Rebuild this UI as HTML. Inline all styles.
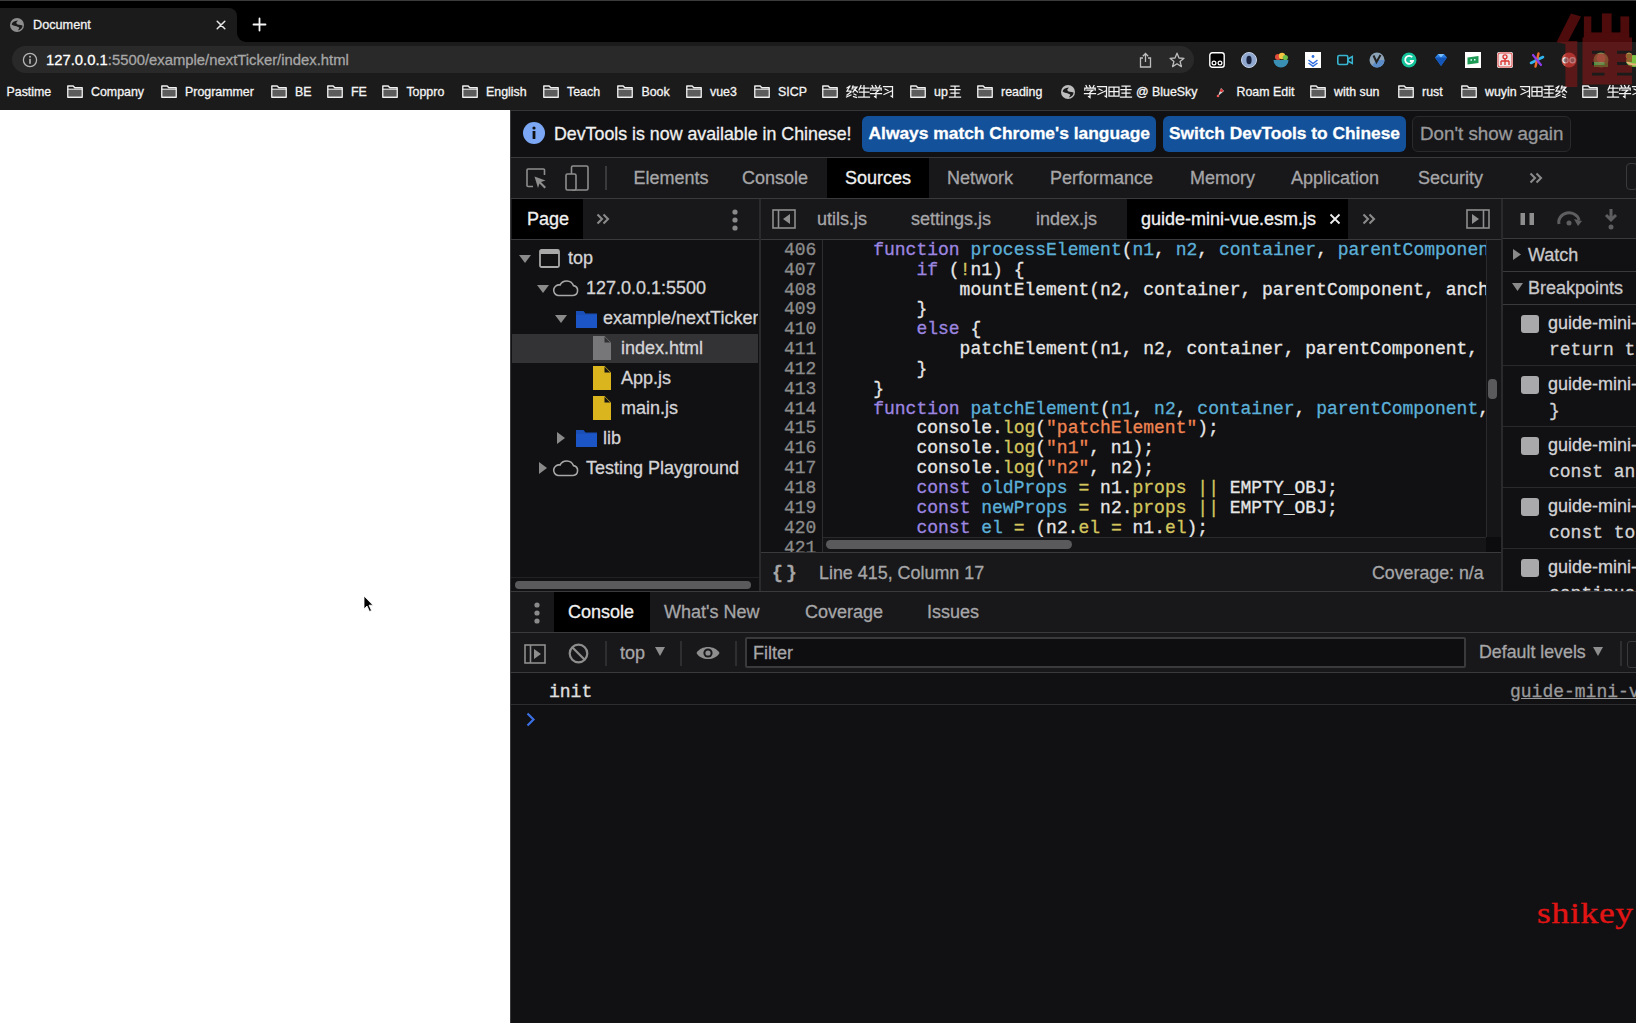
<!DOCTYPE html>
<html><head><meta charset="utf-8">
<style>
*{margin:0;padding:0;box-sizing:border-box}
html,body{width:1636px;height:1023px;overflow:hidden;background:#fff;font-family:"Liberation Sans",sans-serif;position:relative}
.a{position:absolute}
.t{position:absolute;white-space:nowrap;-webkit-text-stroke:0.3px currentColor}
.m{font-family:"Liberation Mono",monospace}
svg{position:absolute;overflow:visible}
</style></head><body>
<div class="a" style="left:0px;top:0px;width:1636px;height:42px;background:#000;"></div>
<div class="a" style="left:0px;top:0px;width:1636px;height:1px;background:#3b3b3b;"></div>
<div class="a" style="left:0px;top:8px;width:237px;height:34px;background:#1b1b1b;border-top-right-radius:8px;border-top-left-radius:0"></div>
<div class="a" style="left:237px;top:30px;width:12px;height:12px;background:#1b1b1b;"></div>
<div class="a" style="left:237px;top:22px;width:22px;height:20px;background:#000;border-bottom-left-radius:9px"></div>
<svg style="left:10px;top:18px;" width="14" height="14" viewBox="0 0 14 14"><g transform="scale(1.0)"><circle cx="7" cy="7" r="7" fill="#8e8e8e"/><path d="M1.6 6.6 C2 4.2 4 2.6 8 2.4 L6.3 4.6 C6.3 6.4 8.3 7 10.6 7 L12.6 7.6 C12.4 10.2 10.8 11.8 7.8 12.4 L9.4 10 C8.6 8.4 5 8.6 1.6 6.6 Z" fill="#1b1b1b"/></g></svg>
<div class="t" style="left:33px;top:19.25px;font-size:12.7px;line-height:12.7px;color:#f2f2f2;">Document</div>
<svg style="left:216px;top:20px;" width="10" height="10" viewBox="0 0 10 10"><path d="M1.2 1.2 L8.8 8.8 M8.8 1.2 L1.2 8.8" stroke="#e8e8e8" stroke-width="1.5" stroke-linecap="round"/></svg>
<svg style="left:253px;top:18px;" width="13" height="13" viewBox="0 0 13 13"><path d="M6.5 0.5 V12.5 M0.5 6.5 H12.5" stroke="#f5f5f5" stroke-width="1.8" stroke-linecap="round"/></svg>
<div class="a" style="left:0px;top:42px;width:1636px;height:68px;background:#1b1b1b;"></div>
<div class="a" style="left:12px;top:46px;width:1182px;height:27px;background:#292929;border-radius:14px"></div>
<svg style="left:22px;top:52px;" width="16" height="16" viewBox="0 0 16 16"><circle cx="8" cy="8" r="6.6" fill="none" stroke="#b5b5b5" stroke-width="1.3"/><rect x="7.2" y="6.8" width="1.6" height="5" fill="#b5b5b5"/><circle cx="8" cy="4.7" r="1" fill="#b5b5b5"/></svg>
<div class="t" style="left:46px;top:52.94px;font-size:14.84px;line-height:14.84px;color:#ffffff;">127.0.0.1<span style="color:#a6a6a6">:5500/example/nextTicker/index.html</span></div>
<svg style="left:1139px;top:52px;" width="13" height="16" viewBox="0 0 13 16"><path d="M4 6 H1.5 V15 H11.5 V6 H9" fill="none" stroke="#bdbdbd" stroke-width="1.3"/><path d="M6.5 1.5 V10 M3.8 4.2 L6.5 1.5 L9.2 4.2" fill="none" stroke="#bdbdbd" stroke-width="1.3"/></svg>
<svg style="left:1169px;top:52px;" width="16" height="16" viewBox="0 0 16 16"><path d="M8 1.2 L10 6 L15 6.3 L11.1 9.5 L12.4 14.6 L8 11.8 L3.6 14.6 L4.9 9.5 L1 6.3 L6 6 Z" fill="none" stroke="#bdbdbd" stroke-width="1.3" stroke-linejoin="round"/></svg>
<svg style="left:1209px;top:52px;" width="16" height="16" viewBox="0 0 16 16"><rect x="0.8" y="0.8" width="14.4" height="14.4" rx="2.5" fill="#000" stroke="#fff" stroke-width="1.4"/><circle cx="5" cy="11" r="1.9" fill="none" stroke="#fff" stroke-width="1.2"/><circle cx="11" cy="11" r="1.9" fill="none" stroke="#fff" stroke-width="1.2"/></svg>
<svg style="left:1241px;top:52px;" width="16" height="16" viewBox="0 0 16 16"><circle cx="8" cy="8" r="7.5" fill="#8fa6cf"/><ellipse cx="8" cy="8" rx="2.6" ry="4.3" fill="#1a2440"/><circle cx="8" cy="8" r="7.5" fill="none" stroke="#c8d4ea" stroke-width="1"/></svg>
<svg style="left:1273px;top:52px;" width="16" height="16" viewBox="0 0 16 16"><path d="M0.5 8 A7.5 7.5 0 0 0 15.5 8 Z" fill="#3a8fb5"/><circle cx="5" cy="5" r="3" fill="#e04b3b"/><circle cx="9" cy="4" r="3.2" fill="#f4c443"/><circle cx="12.3" cy="5.5" r="2.6" fill="#6bbf4a"/></svg>
<svg style="left:1305px;top:52px;" width="16" height="16" viewBox="0 0 16 16"><rect x="0" y="0" width="16" height="16" fill="#fff"/><path d="M3.5 8 L8 11.5 L12.5 8 M3.5 11 L8 14.3 L12.5 11" fill="none" stroke="#2f6de0" stroke-width="1.4"/><circle cx="8" cy="4.5" r="1.4" fill="#2f6de0"/></svg>
<svg style="left:1337px;top:52px;" width="16" height="16" viewBox="0 0 16 16"><rect x="0.8" y="3.5" width="10" height="9" rx="1.5" fill="none" stroke="#37b5d0" stroke-width="1.6"/><path d="M11 7 L15.3 4.5 V11.5 L11 9 Z" fill="none" stroke="#37b5d0" stroke-width="1.5"/></svg>
<svg style="left:1369px;top:52px;" width="16" height="16" viewBox="0 0 16 16"><circle cx="8" cy="8" r="7.5" fill="#8da3b8"/><path d="M8 8 L15.5 8 A7.5 7.5 0 0 1 3 13.5 Z" fill="#5b8cc8"/><path d="M4.5 3.5 L7.5 10 L11.5 3" fill="none" stroke="#222" stroke-width="2"/></svg>
<svg style="left:1401px;top:52px;" width="16" height="16" viewBox="0 0 16 16"><circle cx="8" cy="8" r="7.5" fill="#15c39a"/><path d="M11.2 5.2 A4 4 0 1 0 12 9 H8.8" fill="none" stroke="#fff" stroke-width="1.8"/></svg>
<svg style="left:1433px;top:52px;" width="16" height="16" viewBox="0 0 16 16"><path d="M2 5.5 L5 2 H11 L14 5.5 L8 14 Z" fill="#2a7de1"/><path d="M2 5.5 H14 L8 14 Z" fill="#1456b8"/><path d="M5 2 L8 5.5 L11 2" fill="#7cc1ff"/></svg>
<svg style="left:1465px;top:52px;" width="16" height="16" viewBox="0 0 16 16"><rect x="0" y="0" width="16" height="16" fill="#fff"/><path d="M2.5 5.5 L13.5 4 V11 L2.5 12.5 Z" fill="#1f9a55"/><rect x="5.5" y="7.2" width="1.5" height="1.5" fill="#dff"/><rect x="9" y="7" width="1.5" height="1.5" fill="#dff"/></svg>
<svg style="left:1497px;top:52px;" width="16" height="16" viewBox="0 0 16 16"><rect x="0" y="0" width="16" height="16" rx="2" fill="#f2e6e6"/><rect x="1" y="1" width="14" height="14" rx="2" fill="none" stroke="#d44" stroke-width="1"/><circle cx="8" cy="4.8" r="2" fill="none" stroke="#d33" stroke-width="1.3"/><path d="M8 7 V13 M4 9 H12 M4 9 V13 M12 9 V13" stroke="#d33" stroke-width="1.3" fill="none"/></svg>
<svg style="left:1529px;top:52px;" width="16" height="16" viewBox="0 0 16 16"><path d="M2 11 L14 5" stroke="#30b6f0" stroke-width="2.6" stroke-linecap="round"/><path d="M9.5 1.5 L6.5 14.5" stroke="#ef6d2c" stroke-width="2.4" stroke-linecap="round"/><path d="M4 3 L12 13" stroke="#8d3cf0" stroke-width="2.2" stroke-linecap="round"/></svg>
<svg style="left:1561px;top:52px;" width="16" height="16" viewBox="0 0 16 16"><circle cx="8" cy="8" r="7.5" fill="#c8574a"/><circle cx="4.5" cy="8.3" r="2.6" fill="#888" stroke="#eee" stroke-width="1.2"/><circle cx="11.5" cy="8.3" r="2.6" fill="#888" stroke="#eee" stroke-width="1.2"/></svg>
<svg style="left:1593px;top:52px;" width="16" height="16" viewBox="0 0 16 16"><circle cx="8" cy="8" r="7.5" fill="#6d8a4a"/><circle cx="8" cy="6" r="4.5" fill="#b38c66"/><path d="M1 11 Q8 16 15 10 V15 H1Z" fill="#3e9a3e"/></svg>
<svg style="left:1625px;top:52px;" width="16" height="16" viewBox="0 0 16 16"><ellipse cx="9" cy="9" rx="8" ry="6" fill="#7bc043"/><circle cx="4" cy="4" r="3" fill="#7bc043" stroke="#c69b5a" stroke-width="1"/><path d="M2 10 Q9 15 16 10" fill="none" stroke="#e8b07a" stroke-width="2"/></svg>
<div class="t" style="left:6.5px;top:85.50px;font-size:12.4px;line-height:12.4px;color:#f4f4f4;">Pastime</div>
<svg style="left:67px;top:85px;" width="16" height="13" viewBox="0 0 16 13"><rect x="1.4" y="4.6" width="13.2" height="7.2" fill="#5c5c5c"/><path d="M0.8 1.0 h5.4 l1.6 1.7 h7.4 v9.6 h-14.4 z" fill="none" stroke="#f0f0f0" stroke-width="1.4" stroke-linejoin="round"/><path d="M0.8 4.2 h14.4" stroke="#f0f0f0" stroke-width="1.1"/></svg>
<div class="t" style="left:91px;top:85.50px;font-size:12.4px;line-height:12.4px;color:#f4f4f4;">Company</div>
<svg style="left:161px;top:85px;" width="16" height="13" viewBox="0 0 16 13"><rect x="1.4" y="4.6" width="13.2" height="7.2" fill="#5c5c5c"/><path d="M0.8 1.0 h5.4 l1.6 1.7 h7.4 v9.6 h-14.4 z" fill="none" stroke="#f0f0f0" stroke-width="1.4" stroke-linejoin="round"/><path d="M0.8 4.2 h14.4" stroke="#f0f0f0" stroke-width="1.1"/></svg>
<div class="t" style="left:185px;top:85.50px;font-size:12.4px;line-height:12.4px;color:#f4f4f4;">Programmer</div>
<svg style="left:271px;top:85px;" width="16" height="13" viewBox="0 0 16 13"><rect x="1.4" y="4.6" width="13.2" height="7.2" fill="#5c5c5c"/><path d="M0.8 1.0 h5.4 l1.6 1.7 h7.4 v9.6 h-14.4 z" fill="none" stroke="#f0f0f0" stroke-width="1.4" stroke-linejoin="round"/><path d="M0.8 4.2 h14.4" stroke="#f0f0f0" stroke-width="1.1"/></svg>
<div class="t" style="left:295px;top:85.50px;font-size:12.4px;line-height:12.4px;color:#f4f4f4;">BE</div>
<svg style="left:327px;top:85px;" width="16" height="13" viewBox="0 0 16 13"><rect x="1.4" y="4.6" width="13.2" height="7.2" fill="#5c5c5c"/><path d="M0.8 1.0 h5.4 l1.6 1.7 h7.4 v9.6 h-14.4 z" fill="none" stroke="#f0f0f0" stroke-width="1.4" stroke-linejoin="round"/><path d="M0.8 4.2 h14.4" stroke="#f0f0f0" stroke-width="1.1"/></svg>
<div class="t" style="left:351px;top:85.50px;font-size:12.4px;line-height:12.4px;color:#f4f4f4;">FE</div>
<svg style="left:382px;top:85px;" width="16" height="13" viewBox="0 0 16 13"><rect x="1.4" y="4.6" width="13.2" height="7.2" fill="#5c5c5c"/><path d="M0.8 1.0 h5.4 l1.6 1.7 h7.4 v9.6 h-14.4 z" fill="none" stroke="#f0f0f0" stroke-width="1.4" stroke-linejoin="round"/><path d="M0.8 4.2 h14.4" stroke="#f0f0f0" stroke-width="1.1"/></svg>
<div class="t" style="left:406.4px;top:85.50px;font-size:12.4px;line-height:12.4px;color:#f4f4f4;">Toppro</div>
<svg style="left:462px;top:85px;" width="16" height="13" viewBox="0 0 16 13"><rect x="1.4" y="4.6" width="13.2" height="7.2" fill="#5c5c5c"/><path d="M0.8 1.0 h5.4 l1.6 1.7 h7.4 v9.6 h-14.4 z" fill="none" stroke="#f0f0f0" stroke-width="1.4" stroke-linejoin="round"/><path d="M0.8 4.2 h14.4" stroke="#f0f0f0" stroke-width="1.1"/></svg>
<div class="t" style="left:486px;top:85.50px;font-size:12.4px;line-height:12.4px;color:#f4f4f4;">English</div>
<svg style="left:542.5px;top:85px;" width="16" height="13" viewBox="0 0 16 13"><rect x="1.4" y="4.6" width="13.2" height="7.2" fill="#5c5c5c"/><path d="M0.8 1.0 h5.4 l1.6 1.7 h7.4 v9.6 h-14.4 z" fill="none" stroke="#f0f0f0" stroke-width="1.4" stroke-linejoin="round"/><path d="M0.8 4.2 h14.4" stroke="#f0f0f0" stroke-width="1.1"/></svg>
<div class="t" style="left:567px;top:85.50px;font-size:12.4px;line-height:12.4px;color:#f4f4f4;">Teach</div>
<svg style="left:617px;top:85px;" width="16" height="13" viewBox="0 0 16 13"><rect x="1.4" y="4.6" width="13.2" height="7.2" fill="#5c5c5c"/><path d="M0.8 1.0 h5.4 l1.6 1.7 h7.4 v9.6 h-14.4 z" fill="none" stroke="#f0f0f0" stroke-width="1.4" stroke-linejoin="round"/><path d="M0.8 4.2 h14.4" stroke="#f0f0f0" stroke-width="1.1"/></svg>
<div class="t" style="left:641.4px;top:85.50px;font-size:12.4px;line-height:12.4px;color:#f4f4f4;">Book</div>
<svg style="left:686px;top:85px;" width="16" height="13" viewBox="0 0 16 13"><rect x="1.4" y="4.6" width="13.2" height="7.2" fill="#5c5c5c"/><path d="M0.8 1.0 h5.4 l1.6 1.7 h7.4 v9.6 h-14.4 z" fill="none" stroke="#f0f0f0" stroke-width="1.4" stroke-linejoin="round"/><path d="M0.8 4.2 h14.4" stroke="#f0f0f0" stroke-width="1.1"/></svg>
<div class="t" style="left:710px;top:85.50px;font-size:12.4px;line-height:12.4px;color:#f4f4f4;">vue3</div>
<svg style="left:754px;top:85px;" width="16" height="13" viewBox="0 0 16 13"><rect x="1.4" y="4.6" width="13.2" height="7.2" fill="#5c5c5c"/><path d="M0.8 1.0 h5.4 l1.6 1.7 h7.4 v9.6 h-14.4 z" fill="none" stroke="#f0f0f0" stroke-width="1.4" stroke-linejoin="round"/><path d="M0.8 4.2 h14.4" stroke="#f0f0f0" stroke-width="1.1"/></svg>
<div class="t" style="left:778px;top:85.50px;font-size:12.4px;line-height:12.4px;color:#f4f4f4;">SICP</div>
<svg style="left:822px;top:85px;" width="16" height="13" viewBox="0 0 16 13"><rect x="1.4" y="4.6" width="13.2" height="7.2" fill="#5c5c5c"/><path d="M0.8 1.0 h5.4 l1.6 1.7 h7.4 v9.6 h-14.4 z" fill="none" stroke="#f0f0f0" stroke-width="1.4" stroke-linejoin="round"/><path d="M0.8 4.2 h14.4" stroke="#f0f0f0" stroke-width="1.1"/></svg>
<svg style="left:846.0px;top:85.4px;" width="12" height="13" viewBox="0 0 12 13"><path d="M1 3 L4 1 M4 1 L1 6 H5 M1 10 L5 7 M0.5 12 L5 10 M7 1 L6 4 M6.5 2 H11 L7 7 M8 4 L11.5 7 M8 9 L10 10 M7.5 11.5 L10.5 12.5" fill="none" stroke="#f4f4f4" stroke-width="1.25" stroke-linecap="square"/></svg><svg style="left:857.9px;top:85.4px;" width="12" height="13" viewBox="0 0 12 13"><path d="M3 0.5 L1 5 M2.5 3 H11 M1.5 7 H11 M6 0.5 V12 M0.5 12 H11.5" fill="none" stroke="#f4f4f4" stroke-width="1.25" stroke-linecap="square"/></svg><svg style="left:869.8px;top:85.4px;" width="12" height="13" viewBox="0 0 12 13"><path d="M2 0.5 L3 2.5 M5.5 0.5 L6.5 2.5 M10 0.5 L9 2.5 M0.8 5 V3 H11.2 V5 M3 5 H9 L6 7.5 M6 7.5 V12.5 L4.5 11.5 M0.5 8.5 H11.5" fill="none" stroke="#f4f4f4" stroke-width="1.25" stroke-linecap="square"/></svg><svg style="left:881.7px;top:85.4px;" width="12" height="13" viewBox="0 0 12 13"><path d="M1.5 1.5 H10.5 V12 L9 11 M3 4 L6 5.5 M2 9.5 L9.5 6" fill="none" stroke="#f4f4f4" stroke-width="1.25" stroke-linecap="square"/></svg>
<svg style="left:910px;top:85px;" width="16" height="13" viewBox="0 0 16 13"><rect x="1.4" y="4.6" width="13.2" height="7.2" fill="#5c5c5c"/><path d="M0.8 1.0 h5.4 l1.6 1.7 h7.4 v9.6 h-14.4 z" fill="none" stroke="#f0f0f0" stroke-width="1.4" stroke-linejoin="round"/><path d="M0.8 4.2 h14.4" stroke="#f0f0f0" stroke-width="1.1"/></svg>
<div class="t" style="left:934px;top:85.50px;font-size:12.4px;line-height:12.4px;color:#f4f4f4;">up</div>
<svg style="left:949px;top:85.4px;" width="12" height="13" viewBox="0 0 12 13"><path d="M2 1 H10 M1 4.5 H11 M6 1 V12 M2 8 H10 M0.5 12 H11.5" fill="none" stroke="#f4f4f4" stroke-width="1.25" stroke-linecap="square"/></svg>
<svg style="left:977px;top:85px;" width="16" height="13" viewBox="0 0 16 13"><rect x="1.4" y="4.6" width="13.2" height="7.2" fill="#5c5c5c"/><path d="M0.8 1.0 h5.4 l1.6 1.7 h7.4 v9.6 h-14.4 z" fill="none" stroke="#f0f0f0" stroke-width="1.4" stroke-linejoin="round"/><path d="M0.8 4.2 h14.4" stroke="#f0f0f0" stroke-width="1.1"/></svg>
<div class="t" style="left:1001px;top:85.50px;font-size:12.4px;line-height:12.4px;color:#f4f4f4;">reading</div>
<svg style="left:1061px;top:85px;" width="14" height="14" viewBox="0 0 14 14"><g transform="scale(1.0)"><circle cx="7" cy="7" r="7" fill="#bdbdbd"/><path d="M1.6 6.6 C2 4.2 4 2.6 8 2.4 L6.3 4.6 C6.3 6.4 8.3 7 10.6 7 L12.6 7.6 C12.4 10.2 10.8 11.8 7.8 12.4 L9.4 10 C8.6 8.4 5 8.6 1.6 6.6 Z" fill="#1b1b1b"/></g></svg>
<svg style="left:1084.0px;top:85.4px;" width="12" height="13" viewBox="0 0 12 13"><path d="M2 0.5 L3 2.5 M5.5 0.5 L6.5 2.5 M10 0.5 L9 2.5 M0.8 5 V3 H11.2 V5 M3 5 H9 L6 7.5 M6 7.5 V12.5 L4.5 11.5 M0.5 8.5 H11.5" fill="none" stroke="#f4f4f4" stroke-width="1.25" stroke-linecap="square"/></svg><svg style="left:1095.9px;top:85.4px;" width="12" height="13" viewBox="0 0 12 13"><path d="M1.5 1.5 H10.5 V12 L9 11 M3 4 L6 5.5 M2 9.5 L9.5 6" fill="none" stroke="#f4f4f4" stroke-width="1.25" stroke-linecap="square"/></svg><svg style="left:1107.8px;top:85.4px;" width="12" height="13" viewBox="0 0 12 13"><path d="M1 2 H11 V11 H1 Z M1 6.5 H11 M6 2 V11" fill="none" stroke="#f4f4f4" stroke-width="1.25" stroke-linecap="square"/></svg><svg style="left:1119.7px;top:85.4px;" width="12" height="13" viewBox="0 0 12 13"><path d="M2 1 H10 M1 4.5 H11 M6 1 V12 M2 8 H10 M0.5 12 H11.5" fill="none" stroke="#f4f4f4" stroke-width="1.25" stroke-linecap="square"/></svg>
<div class="t" style="left:1136px;top:85.50px;font-size:12.4px;line-height:12.4px;color:#f4f4f4;">@ BlueSky</div>
<svg style="left:1215px;top:85px;" width="12" height="13" viewBox="0 0 12 13"><path d="M3 11 L6 3 L9 6 Z" fill="#ddd"/><circle cx="6.5" cy="5.5" r="1.6" fill="#d33"/><circle cx="3" cy="11" r="1.3" fill="#e55"/></svg>
<div class="t" style="left:1236.5px;top:85.50px;font-size:12.4px;line-height:12.4px;color:#f4f4f4;">Roam Edit</div>
<svg style="left:1310px;top:85px;" width="16" height="13" viewBox="0 0 16 13"><rect x="1.4" y="4.6" width="13.2" height="7.2" fill="#5c5c5c"/><path d="M0.8 1.0 h5.4 l1.6 1.7 h7.4 v9.6 h-14.4 z" fill="none" stroke="#f0f0f0" stroke-width="1.4" stroke-linejoin="round"/><path d="M0.8 4.2 h14.4" stroke="#f0f0f0" stroke-width="1.1"/></svg>
<div class="t" style="left:1334px;top:85.50px;font-size:12.4px;line-height:12.4px;color:#f4f4f4;">with sun</div>
<svg style="left:1398px;top:85px;" width="16" height="13" viewBox="0 0 16 13"><rect x="1.4" y="4.6" width="13.2" height="7.2" fill="#5c5c5c"/><path d="M0.8 1.0 h5.4 l1.6 1.7 h7.4 v9.6 h-14.4 z" fill="none" stroke="#f0f0f0" stroke-width="1.4" stroke-linejoin="round"/><path d="M0.8 4.2 h14.4" stroke="#f0f0f0" stroke-width="1.1"/></svg>
<div class="t" style="left:1422px;top:85.50px;font-size:12.4px;line-height:12.4px;color:#f4f4f4;">rust</div>
<svg style="left:1461px;top:85px;" width="16" height="13" viewBox="0 0 16 13"><rect x="1.4" y="4.6" width="13.2" height="7.2" fill="#5c5c5c"/><path d="M0.8 1.0 h5.4 l1.6 1.7 h7.4 v9.6 h-14.4 z" fill="none" stroke="#f0f0f0" stroke-width="1.4" stroke-linejoin="round"/><path d="M0.8 4.2 h14.4" stroke="#f0f0f0" stroke-width="1.1"/></svg>
<div class="t" style="left:1485px;top:85.50px;font-size:12.4px;line-height:12.4px;color:#f4f4f4;">wuyin</div>
<svg style="left:1519.0px;top:85.4px;" width="12" height="13" viewBox="0 0 12 13"><path d="M1.5 1.5 H10.5 V12 L9 11 M3 4 L6 5.5 M2 9.5 L9.5 6" fill="none" stroke="#f4f4f4" stroke-width="1.25" stroke-linecap="square"/></svg><svg style="left:1530.9px;top:85.4px;" width="12" height="13" viewBox="0 0 12 13"><path d="M1 2 H11 V11 H1 Z M1 6.5 H11 M6 2 V11" fill="none" stroke="#f4f4f4" stroke-width="1.25" stroke-linecap="square"/></svg><svg style="left:1542.8px;top:85.4px;" width="12" height="13" viewBox="0 0 12 13"><path d="M2 1 H10 M1 4.5 H11 M6 1 V12 M2 8 H10 M0.5 12 H11.5" fill="none" stroke="#f4f4f4" stroke-width="1.25" stroke-linecap="square"/></svg><svg style="left:1554.7px;top:85.4px;" width="12" height="13" viewBox="0 0 12 13"><path d="M1 3 L4 1 M4 1 L1 6 H5 M1 10 L5 7 M0.5 12 L5 10 M7 1 L6 4 M6.5 2 H11 L7 7 M8 4 L11.5 7 M8 9 L10 10 M7.5 11.5 L10.5 12.5" fill="none" stroke="#f4f4f4" stroke-width="1.25" stroke-linecap="square"/></svg>
<svg style="left:1582px;top:85px;" width="16" height="13" viewBox="0 0 16 13"><rect x="1.4" y="4.6" width="13.2" height="7.2" fill="#5c5c5c"/><path d="M0.8 1.0 h5.4 l1.6 1.7 h7.4 v9.6 h-14.4 z" fill="none" stroke="#f0f0f0" stroke-width="1.4" stroke-linejoin="round"/><path d="M0.8 4.2 h14.4" stroke="#f0f0f0" stroke-width="1.1"/></svg>
<svg style="left:1607.0px;top:85.4px;" width="12" height="13" viewBox="0 0 12 13"><path d="M3 0.5 L1 5 M2.5 3 H11 M1.5 7 H11 M6 0.5 V12 M0.5 12 H11.5" fill="none" stroke="#f4f4f4" stroke-width="1.25" stroke-linecap="square"/></svg><svg style="left:1618.9px;top:85.4px;" width="12" height="13" viewBox="0 0 12 13"><path d="M2 0.5 L3 2.5 M5.5 0.5 L6.5 2.5 M10 0.5 L9 2.5 M0.8 5 V3 H11.2 V5 M3 5 H9 L6 7.5 M6 7.5 V12.5 L4.5 11.5 M0.5 8.5 H11.5" fill="none" stroke="#f4f4f4" stroke-width="1.25" stroke-linecap="square"/></svg><svg style="left:1630.8px;top:85.4px;" width="12" height="13" viewBox="0 0 12 13"><path d="M1.5 1.5 H10.5 V12 L9 11 M3 4 L6 5.5 M2 9.5 L9.5 6" fill="none" stroke="#f4f4f4" stroke-width="1.25" stroke-linecap="square"/></svg>
<svg style="left:1550px;top:5px;" width="90" height="90" viewBox="0 0 90 90"><g fill="rgb(150,22,22)" opacity="0.52"><path d="M21 8.4 L31 11.4 L16.5 39.5 L6.6 37 Z"/><rect x="15.4" y="36" width="11.9" height="46"/><rect x="33.9" y="11.4" width="7.4" height="22.6"/><rect x="51.9" y="8.4" width="9.7" height="25.6"/><rect x="70.4" y="11.4" width="8.8" height="22.6"/><rect x="33.9" y="27.4" width="45.3" height="7.5"/><path fill-rule="evenodd" d="M32.5 32.5 H82 V79.6 H32.5 Z M42 45.7 H54.5 V48.8 H42 Z M67 45.7 H82 V48.8 H67 Z M42 57 H54.5 V60 H42 Z M67 57 H82 V60 H67 Z M42 67.7 H54.5 V70.4 H42 Z M67 67.7 H82 V70.4 H67 Z"/></g></svg>
<div class="a" style="left:510px;top:110px;width:1126px;height:913px;background:#111113;"></div>
<div class="a" style="left:510px;top:110px;width:1px;height:913px;background:#3a3a3c;"></div>
<div class="a" style="left:511px;top:110px;width:1125px;height:47px;background:#111113;"></div>
<svg style="left:523px;top:122px;" width="22" height="22" viewBox="0 0 22 22"><circle cx="11" cy="11" r="11" fill="#7ba7f5"/><rect x="9.6" y="9" width="2.8" height="8" rx="0.4" fill="#111"/><circle cx="11" cy="6" r="1.6" fill="#111"/></svg>
<div class="t" style="left:554px;top:125.63px;font-size:17.8px;line-height:17.8px;color:#f0f0f0;">DevTools is now available in Chinese!</div>
<div class="a" style="left:862px;top:116px;width:294px;height:36px;background:#13529a;border-radius:6px"></div>
<div class="t" style="left:868.5px;top:125.27px;font-size:17.4px;line-height:17.4px;color:#fff;font-weight:bold;">Always match Chrome's language</div>
<div class="a" style="left:1163px;top:116px;width:243px;height:36px;background:#13529a;border-radius:6px"></div>
<div class="t" style="left:1169px;top:125.31px;font-size:17.35px;line-height:17.35px;color:#fff;font-weight:bold;">Switch DevTools to Chinese</div>
<div class="a" style="left:1412px;top:116px;width:159px;height:36px;background:#161618;border-radius:6px;border:1px solid #2a2a2c"></div>
<div class="t" style="left:1420px;top:124.59px;font-size:18.8px;line-height:18.8px;color:#9a9a9c;">Don't show again</div>
<div class="a" style="left:511px;top:110px;width:1125px;height:1px;background:#353537;"></div>
<div class="a" style="left:511px;top:157px;width:1125px;height:1px;background:#3a3a3c;"></div>
<div class="a" style="left:511px;top:158px;width:1125px;height:40px;background:#18181a;"></div>
<svg style="left:526px;top:168px;" width="21" height="21" viewBox="0 0 21 21"><path d="M7 18.5 H2 A1 1 0 0 1 1 17.5 V2 A1 1 0 0 1 2 1 H17.5 A1 1 0 0 1 18.5 2 V7" fill="none" stroke="#8e8e8e" stroke-width="1.6"/><path d="M8.5 8.5 L19.5 12.5 L15 14 L20 19 L18.5 20.5 L13.5 15.5 L12 20 Z" fill="#8e8e8e"/></svg>
<svg style="left:565px;top:165px;" width="24" height="26" viewBox="0 0 24 26"><rect x="6.5" y="1" width="16.5" height="24" rx="1.5" fill="none" stroke="#8e8e8e" stroke-width="1.6"/><rect x="1" y="9" width="10" height="16" rx="1.5" fill="#18181a" stroke="#8e8e8e" stroke-width="1.6"/></svg>
<div class="a" style="left:605px;top:166px;width:2px;height:24px;background:#3a3a3c;"></div>
<div class="a" style="left:827px;top:158px;width:102px;height:40px;background:#000;"></div>
<div class="t" style="left:633.5px;top:168.76px;font-size:18px;line-height:18px;color:#a6a6a8;">Elements</div>
<div class="t" style="left:742px;top:168.76px;font-size:18px;line-height:18px;color:#a6a6a8;">Console</div>
<div class="t" style="left:845px;top:168.76px;font-size:18px;line-height:18px;color:#f0f0f0;">Sources</div>
<div class="t" style="left:947px;top:168.76px;font-size:18px;line-height:18px;color:#a6a6a8;">Network</div>
<div class="t" style="left:1050px;top:168.76px;font-size:18px;line-height:18px;color:#a6a6a8;">Performance</div>
<div class="t" style="left:1190px;top:168.76px;font-size:18px;line-height:18px;color:#a6a6a8;">Memory</div>
<div class="t" style="left:1291px;top:168.76px;font-size:18px;line-height:18px;color:#a6a6a8;">Application</div>
<div class="t" style="left:1418px;top:168.76px;font-size:18px;line-height:18px;color:#a6a6a8;">Security</div>
<svg style="left:1529px;top:172px;" width="14" height="12" viewBox="0 0 14 12"><path d="M1.5 1.5 L6 6 L1.5 10.5 M7.5 1.5 L12 6 L7.5 10.5" fill="none" stroke="#8a8a8a" stroke-width="2.1"/></svg>
<div class="a" style="left:1626px;top:163px;width:12px;height:27px;background:#18181a;border:1px solid #3a3a3c;border-radius:4px"></div>
<div class="a" style="left:511px;top:198px;width:1125px;height:1px;background:#3a3a3c;"></div>
<div class="a" style="left:511px;top:199px;width:249px;height:40px;background:#18181a;"></div>
<div class="a" style="left:512px;top:199px;width:71px;height:40px;background:#000;"></div>
<div class="t" style="left:527px;top:209.76px;font-size:18px;line-height:18px;color:#f0f0f0;">Page</div>
<svg style="left:596px;top:213px;" width="14" height="12" viewBox="0 0 14 12"><path d="M1.5 1.5 L6 6 L1.5 10.5 M7.5 1.5 L12 6 L7.5 10.5" fill="none" stroke="#8a8a8a" stroke-width="2.1"/></svg>
<svg style="left:732px;top:209px;" width="6" height="22" viewBox="0 0 6 22"><circle cx="3" cy="3" r="2.6" fill="#8a8a8a"/><circle cx="3" cy="11" r="2.6" fill="#8a8a8a"/><circle cx="3" cy="19" r="2.6" fill="#8a8a8a"/></svg>
<div class="a" style="left:511px;top:239px;width:249px;height:1px;background:#3a3a3c;"></div>
<div class="a" style="left:512px;top:334px;width:246px;height:29px;background:#333335;"></div>
<svg style="left:519px;top:255px;" width="12" height="8" viewBox="0 0 12 8"><path d="M0 0 H12 L6.0 8 Z" fill="#8a8a8a"/></svg>
<svg style="left:539px;top:249px;" width="21" height="19" viewBox="0 0 21 19"><rect x="1" y="1" width="19" height="17" rx="1.5" fill="none" stroke="#a8a8a8" stroke-width="1.8"/><rect x="1" y="1" width="19" height="4" fill="#a8a8a8"/></svg>
<div class="t" style="left:568px;top:248.76px;font-size:18px;line-height:18px;color:#d4d4d6;">top</div>
<svg style="left:537px;top:285px;" width="12" height="8" viewBox="0 0 12 8"><path d="M0 0 H12 L6.0 8 Z" fill="#8a8a8a"/></svg>
<svg style="left:552px;top:279px;" width="27" height="18" viewBox="0 0 27 18"><path d="M6 16.5 H21 A5 5 0 0 0 21.5 6.6 A7.5 7.5 0 0 0 8 6 A5.3 5.3 0 0 0 6 16.5 Z" fill="none" stroke="#a8a8a8" stroke-width="1.6"/></svg>
<div class="t" style="left:586px;top:278.76px;font-size:18px;line-height:18px;color:#d4d4d6;">127.0.0.1:5500</div>
<svg style="left:555px;top:315px;" width="12" height="8" viewBox="0 0 12 8"><path d="M0 0 H12 L6.0 8 Z" fill="#8a8a8a"/></svg>
<svg style="left:576px;top:310px;" width="21" height="18" viewBox="0 0 21 18"><path d="M0 1 H7.5 L9.5 3.5 H21 V18 H0 Z" fill="#1a4fb8"/><rect x="0" y="5" width="21" height="13" fill="#1c56c6"/></svg>
<div class="a" style="left:600px;top:300px;width:158px;height:40px;overflow:hidden"><div class="a" style="left:-600px;top:-300px"><div class="t" style="left:603px;top:308.76px;font-size:18px;line-height:18px;color:#d4d4d6;">example/nextTicker</div></div></div>
<div class="a" style="left:758px;top:240px;width:2px;height:351px;background:#111113;"></div>
<svg style="left:593px;top:336px;" width="18" height="24" viewBox="0 0 18 24"><path d="M0 0 H11.5 L18 6.5 V24 H0 Z" fill="#77777a"/><path d="M11.5 0.8 L17.2 6.5 H11.5 Z" fill="#303032"/></svg>
<div class="t" style="left:621px;top:338.76px;font-size:18px;line-height:18px;color:#d4d4d6;">index.html</div>
<svg style="left:593px;top:366px;" width="18" height="24" viewBox="0 0 18 24"><path d="M0 0 H11.5 L18 6.5 V24 H0 Z" fill="#dab51e"/><path d="M11.5 0.8 L17.2 6.5 H11.5 Z" fill="#151515"/></svg>
<div class="t" style="left:621px;top:368.76px;font-size:18px;line-height:18px;color:#d4d4d6;">App.js</div>
<svg style="left:593px;top:396px;" width="18" height="24" viewBox="0 0 18 24"><path d="M0 0 H11.5 L18 6.5 V24 H0 Z" fill="#dab51e"/><path d="M11.5 0.8 L17.2 6.5 H11.5 Z" fill="#151515"/></svg>
<div class="t" style="left:621px;top:398.76px;font-size:18px;line-height:18px;color:#d4d4d6;">main.js</div>
<svg style="left:557px;top:432px;" width="8" height="12" viewBox="0 0 8 12"><path d="M0 0 V12 L8 6.0 Z" fill="#8a8a8a"/></svg>
<svg style="left:576px;top:429px;" width="21" height="18" viewBox="0 0 21 18"><path d="M0 1 H7.5 L9.5 3.5 H21 V18 H0 Z" fill="#1a4fb8"/><rect x="0" y="5" width="21" height="13" fill="#1c56c6"/></svg>
<div class="t" style="left:603px;top:428.76px;font-size:18px;line-height:18px;color:#d4d4d6;">lib</div>
<svg style="left:539px;top:462px;" width="8" height="12" viewBox="0 0 8 12"><path d="M0 0 V12 L8 6.0 Z" fill="#8a8a8a"/></svg>
<svg style="left:552px;top:459px;" width="27" height="18" viewBox="0 0 27 18"><path d="M6 16.5 H21 A5 5 0 0 0 21.5 6.6 A7.5 7.5 0 0 0 8 6 A5.3 5.3 0 0 0 6 16.5 Z" fill="none" stroke="#a8a8a8" stroke-width="1.6"/></svg>
<div class="t" style="left:586px;top:458.76px;font-size:18px;line-height:18px;color:#d4d4d6;">Testing Playground</div>
<div class="a" style="left:511px;top:577px;width:248px;height:1px;background:#222224;"></div>
<div class="a" style="left:515px;top:581px;width:236px;height:8px;background:#5a5a5c;border-radius:4px"></div>
<div class="a" style="left:759px;top:199px;width:2px;height:392px;background:#2a2a2c;"></div>
<div class="a" style="left:761px;top:199px;width:740px;height:40px;background:#18181a;"></div>
<svg style="left:772px;top:209px;" width="24" height="20" viewBox="0 0 24 20"><rect x="1" y="1" width="22" height="18" fill="none" stroke="#8e8e8e" stroke-width="1.6"/><path d="M6.5 1 V19" stroke="#8e8e8e" stroke-width="1.6"/><path d="M18 5 V15 L11 10 Z" fill="#8e8e8e"/></svg>
<div class="t" style="left:817px;top:209.76px;font-size:18px;line-height:18px;color:#a6a6a8;">utils.js</div>
<div class="t" style="left:911px;top:209.76px;font-size:18px;line-height:18px;color:#a6a6a8;">settings.js</div>
<div class="t" style="left:1036px;top:209.76px;font-size:18px;line-height:18px;color:#a6a6a8;">index.js</div>
<div class="a" style="left:1127px;top:199px;width:221px;height:40px;background:#000;"></div>
<div class="t" style="left:1141px;top:209.76px;font-size:18px;line-height:18px;color:#f0f0f0;">guide-mini-vue.esm.js</div>
<svg style="left:1329px;top:213px;" width="12" height="12" viewBox="0 0 12 12"><path d="M1.5 1.5 L10.5 10.5 M10.5 1.5 L1.5 10.5" stroke="#eee" stroke-width="1.8"/></svg>
<svg style="left:1362px;top:213px;" width="14" height="12" viewBox="0 0 14 12"><path d="M1.5 1.5 L6 6 L1.5 10.5 M7.5 1.5 L12 6 L7.5 10.5" fill="none" stroke="#8a8a8a" stroke-width="2.1"/></svg>
<svg style="left:1466px;top:209px;" width="24" height="20" viewBox="0 0 24 20"><rect x="1" y="1" width="22" height="18" fill="none" stroke="#8e8e8e" stroke-width="1.6"/><path d="M17.5 1 V19" stroke="#8e8e8e" stroke-width="1.6"/><path d="M6 5 V15 L13 10 Z" fill="#8e8e8e"/></svg>
<div class="a" style="left:761px;top:239px;width:740px;height:1px;background:#3a3a3c;"></div>
<div class="a" style="left:761px;top:240px;width:725px;height:312px;background:#111113;"></div>
<div class="a" style="left:822px;top:240px;width:1px;height:312px;background:#2e2e30;"></div>
<div class="a" style="left:1486px;top:240px;width:15px;height:297px;background:#151517;"></div>
<div class="a" style="left:1486px;top:240px;width:1px;height:297px;background:#2a2a2c;"></div>
<div class="a" style="left:1488px;top:379px;width:9px;height:20px;background:#5a5a5c;border-radius:4px"></div>
<div class="a" style="left:761px;top:240px;width:61px;height:312px;overflow:hidden"><div class="a" style="left:-761px;top:-240px"><div class="t m" style="left:784px;top:240.80px;font-size:18px;line-height:18px;color:#8b8b8b;">406</div><div class="t m" style="left:784px;top:260.65px;font-size:18px;line-height:18px;color:#8b8b8b;">407</div><div class="t m" style="left:784px;top:280.50px;font-size:18px;line-height:18px;color:#8b8b8b;">408</div><div class="t m" style="left:784px;top:300.35px;font-size:18px;line-height:18px;color:#8b8b8b;">409</div><div class="t m" style="left:784px;top:320.20px;font-size:18px;line-height:18px;color:#8b8b8b;">410</div><div class="t m" style="left:784px;top:340.05px;font-size:18px;line-height:18px;color:#8b8b8b;">411</div><div class="t m" style="left:784px;top:359.90px;font-size:18px;line-height:18px;color:#8b8b8b;">412</div><div class="t m" style="left:784px;top:379.75px;font-size:18px;line-height:18px;color:#8b8b8b;">413</div><div class="t m" style="left:784px;top:399.60px;font-size:18px;line-height:18px;color:#8b8b8b;">414</div><div class="t m" style="left:784px;top:419.45px;font-size:18px;line-height:18px;color:#8b8b8b;">415</div><div class="t m" style="left:784px;top:439.30px;font-size:18px;line-height:18px;color:#8b8b8b;">416</div><div class="t m" style="left:784px;top:459.15px;font-size:18px;line-height:18px;color:#8b8b8b;">417</div><div class="t m" style="left:784px;top:479.00px;font-size:18px;line-height:18px;color:#8b8b8b;">418</div><div class="t m" style="left:784px;top:498.85px;font-size:18px;line-height:18px;color:#8b8b8b;">419</div><div class="t m" style="left:784px;top:518.70px;font-size:18px;line-height:18px;color:#8b8b8b;">420</div><div class="t m" style="left:784px;top:538.55px;font-size:18px;line-height:18px;color:#8b8b8b;">421</div></div></div>
<div class="a" style="left:823px;top:240px;width:663px;height:297px;overflow:hidden"><div class="a" style="left:-823px;top:-240px"><div class="t m" style="left:830px;top:240.80px;font-size:18px;line-height:18px;color:#e6e6e6;white-space:pre">    <span style="color:#9d86e0">function</span> <span style="color:#5cb0d8">processElement</span>(<span style="color:#5cb0d8">n1</span>, <span style="color:#5cb0d8">n2</span>, <span style="color:#5cb0d8">container</span>, <span style="color:#5cb0d8">parentComponent</span>, <span style="color:#5cb0d8">anchor</span>) {</div><div class="t m" style="left:830px;top:260.65px;font-size:18px;line-height:18px;color:#e6e6e6;white-space:pre">        <span style="color:#9d86e0">if</span> (<span style="color:#d4c65e">!</span>n1) {</div><div class="t m" style="left:830px;top:280.50px;font-size:18px;line-height:18px;color:#e6e6e6;white-space:pre">            mountElement(n2, container, parentComponent, anchor);</div><div class="t m" style="left:830px;top:300.35px;font-size:18px;line-height:18px;color:#e6e6e6;white-space:pre">        }</div><div class="t m" style="left:830px;top:320.20px;font-size:18px;line-height:18px;color:#e6e6e6;white-space:pre">        <span style="color:#9d86e0">else</span> {</div><div class="t m" style="left:830px;top:340.05px;font-size:18px;line-height:18px;color:#e6e6e6;white-space:pre">            patchElement(n1, n2, container, parentComponent, anchor);</div><div class="t m" style="left:830px;top:359.90px;font-size:18px;line-height:18px;color:#e6e6e6;white-space:pre">        }</div><div class="t m" style="left:830px;top:379.75px;font-size:18px;line-height:18px;color:#e6e6e6;white-space:pre">    }</div><div class="t m" style="left:830px;top:399.60px;font-size:18px;line-height:18px;color:#e6e6e6;white-space:pre">    <span style="color:#9d86e0">function</span> <span style="color:#5cb0d8">patchElement</span>(<span style="color:#5cb0d8">n1</span>, <span style="color:#5cb0d8">n2</span>, <span style="color:#5cb0d8">container</span>, <span style="color:#5cb0d8">parentComponent</span>, <span style="color:#5cb0d8">anchor</span>) {</div><div class="t m" style="left:830px;top:419.45px;font-size:18px;line-height:18px;color:#e6e6e6;white-space:pre">        console.<span style="color:#d4c65e">log</span>(<span style="color:#f08552">"patchElement"</span>);</div><div class="t m" style="left:830px;top:439.30px;font-size:18px;line-height:18px;color:#e6e6e6;white-space:pre">        console.<span style="color:#d4c65e">log</span>(<span style="color:#f08552">"n1"</span>, n1);</div><div class="t m" style="left:830px;top:459.15px;font-size:18px;line-height:18px;color:#e6e6e6;white-space:pre">        console.<span style="color:#d4c65e">log</span>(<span style="color:#f08552">"n2"</span>, n2);</div><div class="t m" style="left:830px;top:479.00px;font-size:18px;line-height:18px;color:#e6e6e6;white-space:pre">        <span style="color:#9d86e0">const</span> <span style="color:#5cb0d8">oldProps</span> <span style="color:#d4c65e">=</span> n1.<span style="color:#d4c65e">props</span> <span style="color:#d4c65e">||</span> EMPTY_OBJ;</div><div class="t m" style="left:830px;top:498.85px;font-size:18px;line-height:18px;color:#e6e6e6;white-space:pre">        <span style="color:#9d86e0">const</span> <span style="color:#5cb0d8">newProps</span> <span style="color:#d4c65e">=</span> n2.<span style="color:#d4c65e">props</span> <span style="color:#d4c65e">||</span> EMPTY_OBJ;</div><div class="t m" style="left:830px;top:518.70px;font-size:18px;line-height:18px;color:#e6e6e6;white-space:pre">        <span style="color:#9d86e0">const</span> <span style="color:#5cb0d8">el</span> <span style="color:#d4c65e">=</span> (n2.<span style="color:#d4c65e">el</span> <span style="color:#d4c65e">=</span> n1.<span style="color:#d4c65e">el</span>);</div><div class="t m" style="left:830px;top:538.55px;font-size:18px;line-height:18px;color:#e6e6e6;white-space:pre">        patchChildren(n1, n2, el, parentComponent, anchor);</div></div></div>
<div class="a" style="left:823px;top:537px;width:663px;height:15px;background:#151517;"></div>
<div class="a" style="left:823px;top:537px;width:663px;height:1px;background:#2a2a2c;"></div>
<div class="a" style="left:1486px;top:537px;width:15px;height:15px;background:#0c0c0e;"></div>
<div class="a" style="left:826px;top:540px;width:246px;height:9px;background:#5a5a5c;border-radius:4.5px"></div>
<div class="a" style="left:761px;top:552px;width:740px;height:1px;background:#3a3a3c;"></div>
<div class="a" style="left:761px;top:553px;width:740px;height:38px;background:#18181a;"></div>
<div class="t m" style="left:772px;top:564.20px;font-size:18px;line-height:18px;color:#a6a6a8;font-weight:bold">{</div>
<div class="t m" style="left:786px;top:564.20px;font-size:18px;line-height:18px;color:#a6a6a8;font-weight:bold">}</div>
<div class="t" style="left:819px;top:564.85px;font-size:17.9px;line-height:17.9px;color:#a6a6a8;">Line 415, Column 17</div>
<div class="t" style="left:1372px;top:564.93px;font-size:17.8px;line-height:17.8px;color:#a6a6a8;">Coverage: n/a</div>
<div class="a" style="left:1501px;top:199px;width:2px;height:392px;background:#2a2a2c;"></div>
<div class="a" style="left:1503px;top:199px;width:133px;height:39px;background:#18181a;"></div>
<svg style="left:1520px;top:213px;" width="15" height="12" viewBox="0 0 15 12"><rect x="0.5" y="0" width="4.5" height="12" fill="#8e8e8e"/><rect x="9.5" y="0" width="4.5" height="12" fill="#8e8e8e"/></svg>
<svg style="left:1557px;top:209px;" width="28" height="18" viewBox="0 0 28 18"><path d="M2 15 A10 9 0 0 1 22 11" fill="none" stroke="#5e5e60" stroke-width="3"/><path d="M17 10 L25 12 L21 17 Z" fill="#5e5e60"/><circle cx="12" cy="14" r="2.5" fill="#5e5e60"/></svg>
<svg style="left:1603px;top:209px;" width="16" height="22" viewBox="0 0 16 22"><path d="M8 0 V10 M3 6 L8 11 L13 6" fill="none" stroke="#5e5e60" stroke-width="3"/><circle cx="8" cy="18" r="2.5" fill="#5e5e60"/></svg>
<div class="a" style="left:1503px;top:238px;width:133px;height:1px;background:#3a3a3c;"></div>
<svg style="left:1513px;top:249px;" width="8" height="11" viewBox="0 0 8 11"><path d="M0 0 V11 L8 5.5 Z" fill="#8a8a8a"/></svg>
<div class="t" style="left:1528px;top:245.76px;font-size:18px;line-height:18px;color:#c8c8ca;">Watch</div>
<div class="a" style="left:1503px;top:271px;width:133px;height:1px;background:#3a3a3c;"></div>
<svg style="left:1512px;top:283px;" width="11" height="8" viewBox="0 0 11 8"><path d="M0 0 H11 L5.5 8 Z" fill="#8a8a8a"/></svg>
<div class="t" style="left:1528px;top:278.76px;font-size:18px;line-height:18px;color:#c8c8ca;">Breakpoints</div>
<div class="a" style="left:1503px;top:304px;width:133px;height:1px;background:#3a3a3c;"></div>
<div class="a" style="left:1521px;top:315px;width:18px;height:18px;background:#a9a9ab;border-radius:3px"></div>
<div class="t" style="left:1548px;top:313.76px;font-size:18px;line-height:18px;color:#d4d4d6;">guide-mini-vue.esm.js:123</div>
<div class="t m" style="left:1549px;top:340.70px;font-size:18px;line-height:18px;color:#d4d4d6;white-space:pre">return this</div>
<div class="a" style="left:1503px;top:365px;width:133px;height:1px;background:#2a2a2c;"></div>
<div class="a" style="left:1521px;top:376px;width:18px;height:18px;background:#a9a9ab;border-radius:3px"></div>
<div class="t" style="left:1548px;top:374.76px;font-size:18px;line-height:18px;color:#d4d4d6;">guide-mini-vue.esm.js:123</div>
<div class="t m" style="left:1549px;top:401.70px;font-size:18px;line-height:18px;color:#d4d4d6;white-space:pre">}</div>
<div class="a" style="left:1503px;top:426px;width:133px;height:1px;background:#2a2a2c;"></div>
<div class="a" style="left:1521px;top:437px;width:18px;height:18px;background:#a9a9ab;border-radius:3px"></div>
<div class="t" style="left:1548px;top:435.76px;font-size:18px;line-height:18px;color:#d4d4d6;">guide-mini-vue.esm.js:123</div>
<div class="t m" style="left:1549px;top:462.70px;font-size:18px;line-height:18px;color:#d4d4d6;white-space:pre">const anchor</div>
<div class="a" style="left:1503px;top:487px;width:133px;height:1px;background:#2a2a2c;"></div>
<div class="a" style="left:1521px;top:498px;width:18px;height:18px;background:#a9a9ab;border-radius:3px"></div>
<div class="t" style="left:1548px;top:496.76px;font-size:18px;line-height:18px;color:#d4d4d6;">guide-mini-vue.esm.js:123</div>
<div class="t m" style="left:1549px;top:523.70px;font-size:18px;line-height:18px;color:#d4d4d6;white-space:pre">const token</div>
<div class="a" style="left:1503px;top:548px;width:133px;height:1px;background:#2a2a2c;"></div>
<div class="a" style="left:1521px;top:559px;width:18px;height:18px;background:#a9a9ab;border-radius:3px"></div>
<div class="t" style="left:1548px;top:557.76px;font-size:18px;line-height:18px;color:#d4d4d6;">guide-mini-vue.esm.js:123</div>
<div class="t m" style="left:1549px;top:584.70px;font-size:18px;line-height:18px;color:#d4d4d6;white-space:pre">continue</div>
<div class="a" style="left:1503px;top:609px;width:133px;height:1px;background:#2a2a2c;"></div>
<div class="a" style="left:511px;top:591px;width:1125px;height:1px;background:#3a3a3c;"></div>
<div class="a" style="left:511px;top:592px;width:1125px;height:40px;background:#18181a;"></div>
<svg style="left:534px;top:602px;" width="6" height="22" viewBox="0 0 6 22"><circle cx="3" cy="3" r="2.6" fill="#8a8a8a"/><circle cx="3" cy="11" r="2.6" fill="#8a8a8a"/><circle cx="3" cy="19" r="2.6" fill="#8a8a8a"/></svg>
<div class="a" style="left:554px;top:592px;width:96px;height:40px;background:#000;"></div>
<div class="t" style="left:568px;top:602.76px;font-size:18px;line-height:18px;color:#f0f0f0;">Console</div>
<div class="t" style="left:664px;top:602.76px;font-size:18px;line-height:18px;color:#a6a6a8;">What's New</div>
<div class="t" style="left:805px;top:602.76px;font-size:18px;line-height:18px;color:#a6a6a8;">Coverage</div>
<div class="t" style="left:927px;top:602.76px;font-size:18px;line-height:18px;color:#a6a6a8;">Issues</div>
<div class="a" style="left:511px;top:632px;width:1125px;height:1px;background:#3a3a3c;"></div>
<div class="a" style="left:511px;top:633px;width:1125px;height:39px;background:#18181a;"></div>
<svg style="left:524px;top:644px;" width="22" height="20" viewBox="0 0 22 20"><rect x="1" y="1" width="20" height="18" fill="none" stroke="#8e8e8e" stroke-width="1.6"/><path d="M6.5 1 V19" stroke="#8e8e8e" stroke-width="1.6"/><path d="M10 5 V15 L17 10 Z" fill="#8e8e8e"/></svg>
<svg style="left:568px;top:643px;" width="21" height="21" viewBox="0 0 21 21"><circle cx="10.5" cy="10.5" r="8.8" fill="none" stroke="#8e8e8e" stroke-width="2.2"/><path d="M4.5 4.5 L16.5 16.5" stroke="#8e8e8e" stroke-width="2.2"/></svg>
<div class="a" style="left:605px;top:641px;width:2px;height:25px;background:#2e2e30;"></div>
<div class="t" style="left:620px;top:643.76px;font-size:18px;line-height:18px;color:#a6a6a8;">top</div>
<svg style="left:655px;top:647px;" width="10" height="9" viewBox="0 0 10 9"><path d="M0 0 H10 L5 9 Z" fill="#8e8e8e"/></svg>
<div class="a" style="left:680px;top:641px;width:2px;height:25px;background:#2e2e30;"></div>
<svg style="left:696px;top:644px;" width="24" height="18" viewBox="0 0 24 18"><path d="M0.5 9 C5 1 19 1 23.5 9 C19 17 5 17 0.5 9 Z" fill="#8e8e8e"/><circle cx="12" cy="9" r="4.6" fill="#18181a"/><circle cx="12" cy="9" r="2.6" fill="#8e8e8e"/></svg>
<div class="a" style="left:735px;top:641px;width:2px;height:25px;background:#2e2e30;"></div>
<div class="a" style="left:745px;top:637px;width:721px;height:31px;background:#0e0e10;border:2px solid #3a3a3c;border-radius:2px"></div>
<div class="t" style="left:753px;top:643.76px;font-size:18px;line-height:18px;color:#a6a6a8;">Filter</div>
<div class="t" style="left:1479px;top:643.93px;font-size:17.8px;line-height:17.8px;color:#a6a6a8;">Default levels</div>
<svg style="left:1593px;top:647px;" width="10" height="9" viewBox="0 0 10 9"><path d="M0 0 H10 L5 9 Z" fill="#8e8e8e"/></svg>
<div class="a" style="left:1620px;top:641px;width:2px;height:25px;background:#2e2e30;"></div>
<div class="a" style="left:1627px;top:641px;width:12px;height:27px;background:#18181a;border:1px solid #3a3a3c;border-radius:3px"></div>
<div class="a" style="left:511px;top:672px;width:1125px;height:1px;background:#3a3a3c;"></div>
<div class="t m" style="left:549px;top:683.20px;font-size:18px;line-height:18px;color:#e0e0e0;">init</div>
<div class="t m" style="left:1510px;top:683.20px;font-size:18px;line-height:18px;color:#9a9a9c;"><u>guide-mini-vue.esm.js:1</u></div>
<div class="a" style="left:511px;top:704px;width:1125px;height:1px;background:#2e2e30;"></div>
<svg style="left:526px;top:712px;" width="9" height="15" viewBox="0 0 9 15"><path d="M1.5 1.5 L7.5 7.5 L1.5 13.5" fill="none" stroke="#3b6fe3" stroke-width="2.2"/></svg>
<div class="t" style="left:1537px;top:899.45px;font-size:29px;line-height:29px;color:#e21414;font-family:'Liberation Serif',serif;letter-spacing:0.6px;transform:scaleX(1.22);transform-origin:0 0;-webkit-text-stroke:0.35px #e21414">shikey</div>
<svg style="left:363px;top:595px" width="12" height="18" viewBox="0 0 12 18"><path d="M1 1 V14 L4 11 L6.5 16.5 L8.5 15.5 L6 10.2 H10 Z" fill="#000" stroke="#fff" stroke-width="0.8"/></svg>
</body></html>
